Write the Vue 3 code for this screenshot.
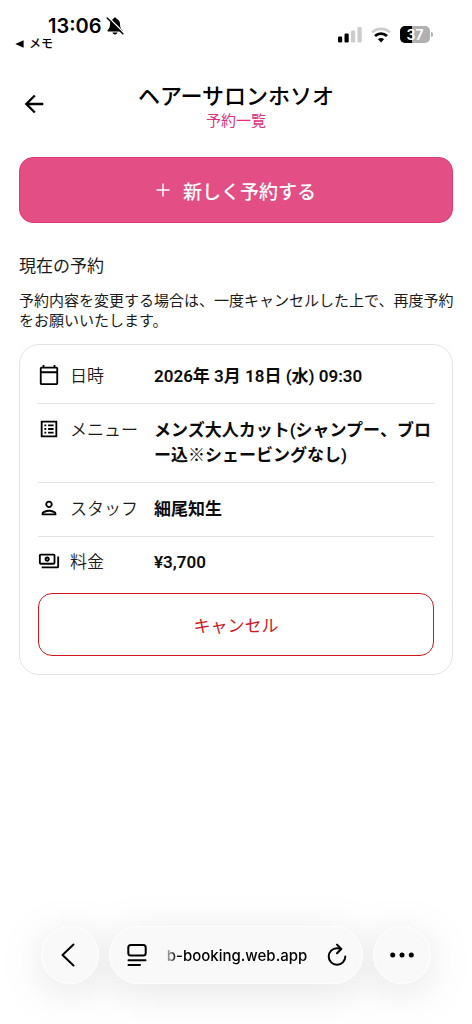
<script setup>
const rows = [
  { icon: 'calendar', label: '日時', value: '2026年 3月 18日 (水) 09:30' },
  { icon: 'list', label: 'メニュー', value: 'メンズ大人カット(シャンプー、ブロー込※シェービングなし)' },
  { icon: 'person', label: 'スタッフ', value: '細尾知生' },
  { icon: 'payments', label: '料金', value: '¥3,700' }
]

const iconPaths = {
  calendar:
    'M20 3h-1V1h-2v2H7V1H5v2H4c-1.1 0-2 .9-2 2v16c0 1.1.9 2 2 2h16c1.1 0 2-.9 2-2V5c0-1.1-.9-2-2-2zm0 18H4V10h16v11zm0-13H4V5h16v3z',
  list:
    'M3 3h18v18H3V3zm2 2v14h14V5H5zm2 2h2v2H7V7zm4 0h6v2h-6V7zm-4 4h2v2H7v-2zm4 0h6v2h-6v-2zm-4 4h2v2H7v-2zm4 0h6v2h-6v-2z',
  person:
    'M12 6c1.1 0 2 .9 2 2s-.9 2-2 2-2-.9-2-2 .9-2 2-2m0 10c2.7 0 5.8 1.29 6 2H6c.23-.72 3.31-2 6-2m0-12C9.79 4 8 5.79 8 8s1.79 4 4 4 4-1.79 4-4-1.79-4-4-4zm0 10c-2.67 0-8 1.34-8 4v2h16v-2c0-2.66-5.33-4-8-4z',
  payments:
    'M19 14V6c0-1.1-.9-2-2-2H3c-1.1 0-2 .9-2 2v8c0 1.1.9 2 2 2h14c1.1 0 2-.9 2-2zm-2 0H3V6h14v8zm-7-6.800c-1.550 0-2.800 1.250-2.800 2.800s1.250 2.800 2.800 2.800 2.800-1.250 2.800-2.800-1.250-2.800-2.800-2.800zm0 2.100a.7.7 0 1 1 0 1.400.7.7 0 0 1 0-1.400zM23 7v11c0 1.1-.9 2-2 2H4v-2h17V7h2z'
}
</script>

<template>
  <div class="screen">
    <div class="status">
      <div class="status-left">
        <div class="clock">
          <span>13:06</span>
          <svg width="18" height="18" viewBox="0 0 18 18" aria-hidden="true">
            <path d="M9 .6c-.9 0-1.5.6-1.6 1.4C5 2.700 4 4.700 4 7c0 3.400-.9 4.600-2.300 6-.6.7-.3 1.500.6 1.500h13.400c.9 0 1.200-.8.6-1.500C14.900 11.600 14 10.400 14 7c0-2.300-1-4.300-3.400-5C10.500 1.200 9.900.6 9 .6zM6.500 15.400h5c-.3 1.200-1.300 2-2.500 2s-2.200-.8-2.500-2z" />
            <path d="M2.600.6 18 16" stroke="#fff" stroke-width="1.500" />
            <path d="M1.200 1 16.800 16.700" stroke="#000" stroke-width="1.500" stroke-linecap="round" />
          </svg>
        </div>
        <a class="back-app" href="#">
          <svg width="9" height="8" viewBox="0 0 9 8" aria-hidden="true"><path d="M.3 4 8.600.2v7.600z" /></svg>
          <span>メモ</span>
        </a>
      </div>
      <div class="status-right">
        <svg width="24" height="16" viewBox="0 0 24 16" aria-hidden="true">
          <rect x="0" y="9.500" width="4.200" height="6" rx="1.200" />
          <rect x="6.500" y="6.500" width="4.200" height="9" rx="1.200" />
          <rect x="13" y="3.500" width="4.200" height="12" rx="1.200" fill="#ccc" />
          <rect x="19.500" y="0" width="4.200" height="15.500" rx="1.200" fill="#ccc" />
        </svg>
        <svg width="20" height="16" viewBox="0 0 20 16" fill="none" aria-hidden="true">
          <path d="M1 5.300c5-4.600 13-4.600 18 0" stroke="#ccc" stroke-width="2.600" />
          <path d="M4 9c3.500-3.200 8.500-3.200 12 0" stroke="#000" stroke-width="2.800" />
          <path d="M6.900 12.200c1.900-1.600 4.300-1.600 6.200 0L10 15.500z" fill="#000" />
        </svg>
        <div class="battery"><span>37</span></div>
      </div>
    </div>

    <header class="header">
      <button class="icon-button" type="button" aria-label="戻る">
        <svg width="28" height="28" viewBox="0 0 24 24" aria-hidden="true">
          <path d="M20 11H7.830l5.590-5.590L12 4l-8 8 8 8 1.410-1.410L7.830 13H20v-2z" />
        </svg>
      </button>
      <div class="titles">
        <h1>ヘアーサロンホソオ</h1>
        <p>予約一覧</p>
      </div>
    </header>

    <main class="content">
      <button class="primary" type="button">
        <svg width="14" height="14" viewBox="0 0 14 14" aria-hidden="true">
          <path d="M7 .5v13M.5 7h13" stroke="#fff" stroke-width="1.500" />
        </svg>
        <span>新しく予約する</span>
      </button>

      <h2>現在の予約</h2>
      <p class="note">予約内容を変更する場合は、一度キャンセルした上で、再度予約をお願いいたします。</p>

      <section class="card">
        <dl>
          <div v-for="row in rows" :key="row.label" class="row">
            <dt>
              <svg width="22" height="22" viewBox="0 0 24 24" aria-hidden="true">
                <path :d="iconPaths[row.icon]" fill-rule="evenodd" />
              </svg>
              <span>{{ row.label }}</span>
            </dt>
            <dd>{{ row.value }}</dd>
          </div>
        </dl>
        <button class="cancel" type="button">キャンセル</button>
      </section>
    </main>

    <nav class="browser-bar">
      <button class="round" type="button" aria-label="前のページ">
        <svg width="24" height="24" viewBox="0 0 24 24" fill="none" aria-hidden="true">
          <path d="M15.500 1.500 4.500 12l11 10.500" stroke="#000" stroke-width="2" stroke-linecap="round" stroke-linejoin="round" />
        </svg>
      </button>
      <div class="address">
        <button type="button" aria-label="ページメニュー">
          <svg width="20" height="24" viewBox="0 0 20 24" fill="none" stroke="#000" stroke-width="2" stroke-linecap="round" aria-hidden="true">
            <rect x="1.300" y="2" width="17.400" height="10.500" rx="2.500" />
            <path d="M1.500 17.200h17M1.500 22h11.500" />
          </svg>
        </button>
        <span class="url">b-booking.web.app</span>
        <button type="button" aria-label="再読み込み">
          <svg width="20" height="24" viewBox="0 0 20 24" fill="none" stroke="#000" stroke-width="2" stroke-linecap="round" stroke-linejoin="round" aria-hidden="true">
            <path d="M18.300 13.500A8.300 8.300 0 1 1 10 5.200c1.500 0 2.800.1 4 .8" />
            <path d="M10 1.600 14.300 6 10 10.300" />
          </svg>
        </button>
      </div>
      <button class="round" type="button" aria-label="その他">
        <svg width="24" height="6" viewBox="0 0 24 6" aria-hidden="true">
          <circle cx="2.700" cy="3" r="2.500" /><circle cx="12" cy="3" r="2.500" /><circle cx="21.300" cy="3" r="2.500" />
        </svg>
      </button>
    </nav>
  </div>
</template>

<style>
body {
  background: #fff;
}
</style>

<style scoped>
* {
  box-sizing: border-box;
}
.screen {
  display: flex;
  flex-direction: column;
  min-height: 100vh;
  overflow: hidden;
  font-family: Roboto, "Noto Sans CJK JP", sans-serif;
  color: #1c1c1c;
}
h1, h2, p, dl, dd {
  margin: 0;
}
button {
  font: inherit;
  color: inherit;
  padding: 0;
  border: 0;
  background: none;
  cursor: pointer;
}
svg {
  display: block;
  flex: none;
}
.status {
  display: flex;
  justify-content: space-between;
  align-items: flex-start;
  padding: 14px 42px 0 15px;
  color: #000;
  font-family: Inter, "Noto Sans CJK JP", sans-serif;
}
.clock {
  display: flex;
  align-items: center;
  gap: 4px;
  padding-left: 33px;
  font-size: 20px;
  font-weight: 600;
  line-height: 24px;
}
.back-app {
  display: flex;
  align-items: center;
  gap: 5px;
  font-size: 12px;
  font-weight: 500;
  line-height: 12px;
  color: #000;
  text-decoration: none;
}
.status-right {
  display: flex;
  align-items: center;
  gap: 9px;
  padding-top: 12px;
}
.battery {
  position: relative;
  width: 30px;
  height: 17px;
  border-radius: 5px;
  background: linear-gradient(to right, #000 12px, #b0b0b0 12px);
  color: #fff;
  font-size: 14px;
  font-weight: 600;
  line-height: 17px;
  text-align: center;
}
.battery::after {
  content: "";
  position: absolute;
  left: 31px;
  top: 6px;
  width: 2px;
  height: 5px;
  border-radius: 0 2px 2px 0;
  background: #b0b0b0;
}
.header {
  display: grid;
  grid-template-columns: 28px 1fr 28px;
  align-items: start;
  padding: 33px 20px 0;
}
.icon-button {
  width: 28px;
  height: 28px;
  margin-top: 7px;
  color: #000;
}
.titles {
  text-align: center;
}
h1 {
  font-size: 22px;
  font-weight: 500;
  line-height: 28px;
  color: #000;
}
.titles p {
  font-size: 15px;
  line-height: 20px;
  color: #e0307c;
}
.content {
  padding: 26px 19px 24px;
}
.primary {
  display: flex;
  align-items: center;
  justify-content: center;
  gap: 13px;
  width: 100%;
  height: 66px;
  border: 1px solid #de3a78;
  border-radius: 14px;
  background: #e34e84;
  color: #fff;
  font-size: 19px;
  font-weight: 500;
}
h2 {
  margin-top: 31px;
  font-size: 17px;
  font-weight: 400;
  line-height: 24px;
}
.note {
  margin: 13px -1px 0 0;
  font-size: 15px;
  line-height: 20px;
}
.card {
  margin-top: 13px;
  padding: 5px 18px 18px;
  border: 1px solid #e2e2e2;
  border-radius: 20px;
}
.row {
  display: grid;
  grid-template-columns: 116px 1fr;
  padding: 14px 0;
  border-bottom: 1px solid #e2e2e2;
  font-size: 17px;
  line-height: 25px;
}
.row:last-child {
  padding-top: 13px;
  border-bottom: 0;
}
dt {
  display: flex;
  align-items: flex-start;
  gap: 10px;
  font-weight: 350;
}
dd {
  font-weight: 600;
  line-break: loose;
  color: #0c0c0c;
}
.cancel {
  display: block;
  width: 100%;
  height: 63px;
  margin-top: 4px;
  border: 1px solid #d0161b;
  border-radius: 14px;
  color: #d0161b;
  font-size: 17px;
}
.browser-bar {
  display: flex;
  gap: 10px;
  margin-top: auto;
  padding: 0 41px 40px;
  filter: drop-shadow(0 8px 20px rgba(0, 0, 0, 0.1));
}
.round,
.address {
  height: 58px;
  border: 1px solid #fff;
  border-radius: 29px;
  background: #f9f9f9;
}
.round {
  display: grid;
  place-items: center;
  flex: none;
  width: 58px;
}
.address {
  display: flex;
  align-items: center;
  justify-content: space-between;
  flex: 1;
  padding: 0 15px 0 17px;
}
.url {
  color: #000;
  font-family: Inter, sans-serif;
  font-size: 15px;
  font-weight: 500;
  mask-image: linear-gradient(to right, rgba(0, 0, 0, 0.3), #000 10px);
}
</style>
